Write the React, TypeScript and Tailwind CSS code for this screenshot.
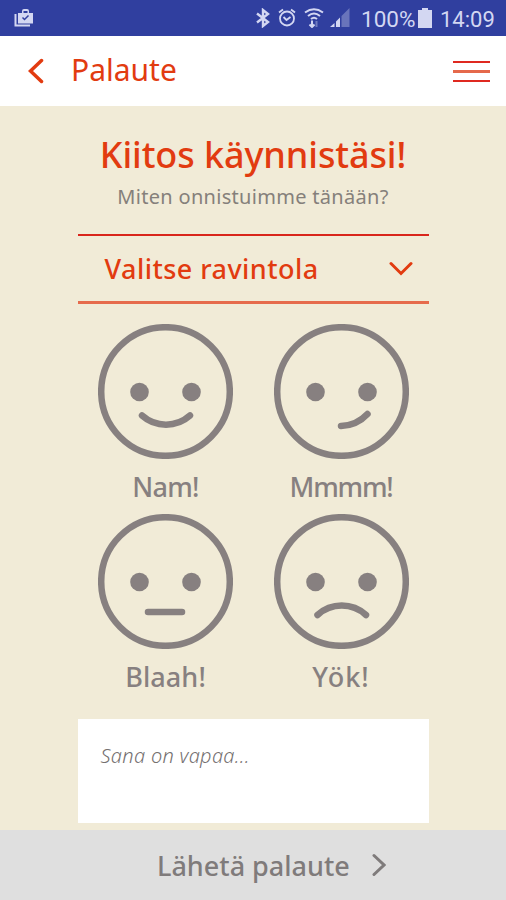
import { useState } from "react"
import type { ReactNode } from "react"

type Mood = {
  id: string
  label: string
  className: string
  mouth: ReactNode
}

const moods: Mood[] = [
  {
    id: "nam",
    label: "Nam!",
    className: "tracking-[-0.7px]",
    mouth: <path d="M44 91.500A36 36 0 0 0 92 91.500" />,
  },
  {
    id: "mmmm",
    label: "Mmmm!",
    className: "tracking-[-1.2px]",
    mouth: <path d="M67 102A38 38 0 0 0 93.500 90" />,
  },
  {
    id: "blaah",
    label: "Blaah!",
    className: "tracking-[0.1px]",
    mouth: <path d="M50 98H84" />,
  },
  {
    id: "yok",
    label: "Yök!",
    className: "tracking-[1px]",
    mouth: <path d="M43.500 101A36 36 0 0 1 92 101" />,
  },
]

const StatusBar = () => (
  <div className="flex h-9 shrink-0 items-center bg-[#303f9f] pr-[11px] pl-[14px] text-[#d3d7f2]">
    <svg width="20" height="20" viewBox="0 0 20 20" fill="none" className="mr-auto">
      <path d="M1.500 6v11.500H16" stroke="currentColor" strokeWidth="2" />
      <path d="M4 5h4V3Q8 1 10 1h3q2 0 2 2v2h4v10.500H4zM9.500 3v2h4V3z" fill="currentColor" fillRule="evenodd" />
      <path d="M8.500 9.500l2 2 4-4" stroke="#303f9f" strokeWidth="1.500" />
    </svg>
    <svg width="14" height="20" viewBox="0 0 14 20" fill="none" stroke="currentColor" strokeWidth="2.400" className="mr-[8px]">
      <path d="M1 5.500l11 8.500-5 4V2l5 4-11 8.500" />
    </svg>
    <svg width="18" height="20" viewBox="0 0 18 20" fill="none" stroke="currentColor" strokeWidth="1.800" className="mr-[8px]">
      <circle cx="9" cy="10.500" r="7" />
      <path d="M1 4.500l4-3M17 4.500l-4-3M5.500 9l3 3 4-3" />
    </svg>
    <svg width="20" height="20" viewBox="0 0 20 20" fill="none" stroke="currentColor" strokeWidth="2" className="mr-[6px]">
      <path d="M1 4.500Q10-2 19 4.500M4 8Q10 3 16 8M7 11Q10 8.500 13 11" />
      <path d="M8 12.500v7M5.500 16.500L8 19l2.500-2.500" />
      <path d="M12.500 19v-6" opacity="0.4" />
    </svg>
    <svg width="20" height="20" viewBox="0 0 20 20" fill="currentColor" className="mr-[11px]">
      <path d="M19.500 0v19h-8V8z" opacity="0.35" />
      <path d="M10 9.500V19H6v-5.500zM4.500 15v4H0z" />
    </svg>
    <span className="mt-[3px] w-[57px] font-[Roboto] text-[22.500px] leading-none">100%</span>
    <svg width="14" height="20" viewBox="0 0 14 20" fill="currentColor" className="mr-[8px]">
      <path d="M4 0h6v2h4v18H0V2h4z" />
    </svg>
    <span className="mt-[3px] w-[55px] font-[Roboto] text-[22px] leading-none">14:09</span>
  </div>
)

const Header = () => (
  <header className="flex h-[70px] shrink-0 items-center bg-white pr-4 pl-7 text-[#e23b10]">
    <button aria-label="Takaisin">
      <svg width="16" height="26" viewBox="0 0 16 26" fill="none" stroke="currentColor" strokeWidth="3.500" strokeLinecap="round">
        <path d="M13.500 2.500L2.500 13l11 10.500" />
      </svg>
    </button>
    <h1 className="mb-[2px] ml-[27px] text-[30px] leading-none">Palaute</h1>
    <button aria-label="Valikko" className="ml-auto flex w-[37px] flex-col gap-[7px]">
      <span className="h-[2px] bg-[#df2920]" />
      <span className="h-[3px] bg-[#e5694b]" />
      <span className="h-[2px] bg-[#df2920]" />
    </button>
  </header>
)

const App = () => {
  const [comment, setComment] = useState("")
  const [selected, setSelected] = useState<string | null>(null)

  return (
    <div className="flex h-[900px] w-[506px] flex-col overflow-hidden bg-[#f1ebd7] font-['Noto_Sans',sans-serif]">
      <StatusBar />
      <Header />

      <main className="flex flex-1 flex-col items-center">
        <h2 className="mt-[26px] text-[36px] leading-[46px] font-medium tracking-[-0.1px] text-[#e23b10]">Kiitos käynnistäsi!</h2>
        <p className="mt-[6px] text-[20px] leading-[26px] tracking-[0.3px] text-[#85807b]">Miten onnistuimme tänään?</p>

        <button className="mt-6 flex h-[70px] w-[351px] items-center justify-between border-t-2 border-b-3 border-t-[#d9261c] border-b-[#e66b4c] pr-4 pl-[27px] text-[#e23b10]">
          <span className="text-[27px] leading-none font-medium tracking-[0.45px]">Valitse ravintola</span>
          <svg width="24" height="15" viewBox="0 0 24 15" fill="none" stroke="currentColor" strokeWidth="3" strokeLinecap="round">
            <path d="M2 2.500l10 10L22 2.500" />
          </svg>
        </button>

        <div className="mt-5 grid w-[351px] grid-cols-[175px_176px]">
          {moods.map((mood) => (
            <button
              key={mood.id}
              className="flex h-[190px] flex-col items-center pl-px text-[#878080]"
              aria-pressed={selected === mood.id}
              onClick={() => setSelected(mood.id)}
            >
              <svg width="135" height="135" viewBox="0 0 135 135" fill="none" stroke="currentColor" strokeWidth="6.500" strokeLinecap="round">
                <circle cx="67.500" cy="67.500" r="64.300" />
                <circle cx="41.500" cy="68" r="9.300" fill="currentColor" stroke="none" />
                <circle cx="93.500" cy="68" r="9.300" fill="currentColor" stroke="none" />
                {mood.mouth}
              </svg>
              <span className={`mt-[9px] text-[27px] leading-[38px] font-medium ${mood.className}`}>{mood.label}</span>
            </button>
          ))}
        </div>

        <textarea
          className="mt-[15px] h-[104px] w-[351px] resize-none bg-white px-[23px] py-[23px] text-[20px] leading-[28px] font-light tracking-[0.3px] text-[#858080] italic placeholder:text-[#757070]"
          placeholder="Sana on vapaa..."
          value={comment}
          onChange={(e) => setComment(e.target.value)}
        />
      </main>

      <button className="flex h-[70px] shrink-0 items-center bg-[#dfdfdf] pl-[157px] text-[#7f7b7b]">
        <span className="w-[215px] text-left text-[27px] leading-none font-medium">Lähetä palaute</span>
        <svg width="14" height="24" viewBox="0 0 14 24" fill="none" stroke="currentColor" strokeWidth="3" strokeLinecap="round">
          <path d="M2 2.500l10 9.500L2 21.500" />
        </svg>
      </button>
    </div>
  )
}

export default App
